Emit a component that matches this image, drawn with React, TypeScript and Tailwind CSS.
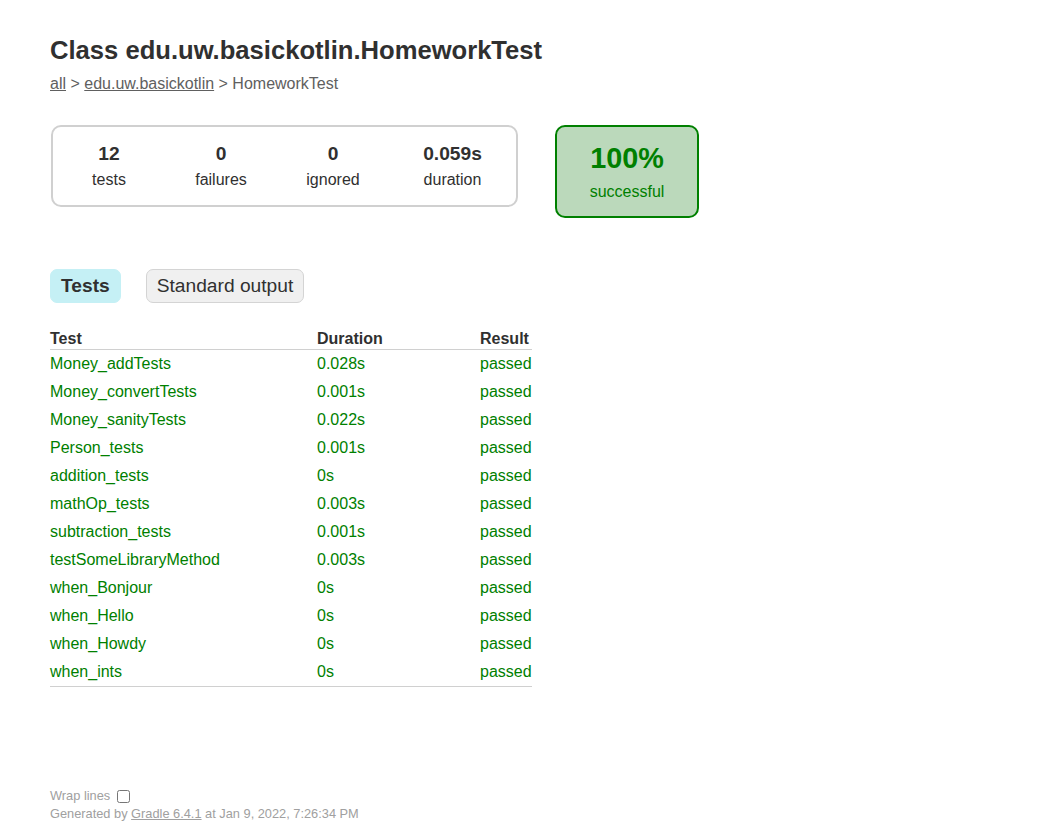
import React from "react";

const tests: [string, string][] = [
  ["Money_addTests", "0.028s"],
  ["Money_convertTests", "0.001s"],
  ["Money_sanityTests", "0.022s"],
  ["Person_tests", "0.001s"],
  ["addition_tests", "0s"],
  ["mathOp_tests", "0.003s"],
  ["subtraction_tests", "0.001s"],
  ["testSomeLibraryMethod", "0.003s"],
  ["when_Bonjour", "0s"],
  ["when_Hello", "0s"],
  ["when_Howdy", "0s"],
  ["when_ints", "0s"],
];

const counters: { value: string; label: string; w: string }[] = [
  { value: "12", label: "tests", w: "w-[112px]" },
  { value: "0", label: "failures", w: "w-[112px]" },
  { value: "0", label: "ignored", w: "w-[112px]" },
  { value: "0.059s", label: "duration", w: "w-[127px]" },
];

export default function App() {
  return (
    <div className="min-h-screen bg-white px-[50px] pt-[36px] pb-[10px] text-base text-[#303030] font-['Liberation_Sans',Arial,sans-serif]">
      <h1 className="text-[25.6px] font-bold leading-[29px] whitespace-nowrap mb-[10px]">
        Class edu.uw.basickotlin.HomeworkTest
      </h1>
      <div className="leading-[18px] text-[#606060]">
        <a className="underline text-[#606060]" href="#">all</a> &gt;{" "}
        <a className="underline text-[#606060]" href="#">edu.uw.basickotlin</a> &gt; HomeworkTest
      </div>

      <div className="mt-[32px] flex items-start">
        <div className="ml-px flex border-2 border-[#d0d0d0] rounded-[10px]">
          {counters.map((c) => (
            <div key={c.label} className={`${c.w} pt-[16px] pb-[16px] text-center`}>
              <div className="text-[19.2px] font-bold leading-[22px] mb-[6px]">{c.value}</div>
              <div className="leading-[18px]">{c.label}</div>
            </div>
          ))}
        </div>
        <div className="ml-[37px] w-[144px] border-2 border-[#008000] bg-[#bbd9bb] rounded-[10px] pt-[15px] pb-[15px] text-center text-[#008000]">
          <div className="text-[28.8px] font-bold leading-[33px] mb-[8px]">100%</div>
          <div className="leading-[18px]">successful</div>
        </div>
      </div>

      <div className="mt-[51px] flex gap-[25px]">
        <div className="rounded-[7px] border border-[#c5f0f5] bg-[#c5f0f5] px-[10px] py-[5px] text-[19.2px] leading-[22px] font-bold">
          Tests
        </div>
        <div className="rounded-[7px] border border-[#d4d4d4] bg-[#f0f0f0] px-[10px] py-[5px] text-[19.2px] leading-[22px]">
          Standard output
        </div>
      </div>

      <div className="mt-[26px] w-[482px] border-b border-[#d0d0d0]">
        <div className="grid grid-cols-[267px_163px_52px] border-b border-[#d0d0d0] py-px leading-[18px] font-bold whitespace-nowrap">
          <div>Test</div>
          <div>Duration</div>
          <div>Result</div>
        </div>
        {tests.map(([name, dur]) => (
          <div
            key={name}
            className="grid grid-cols-[267px_163px_52px] py-[5px] leading-[18px] text-[#008000] whitespace-nowrap"
          >
            <div>{name}</div>
            <div>{dur}</div>
            <div>passed</div>
          </div>
        ))}
      </div>

      <div className="mt-[99px] text-[12.8px] text-[#a0a0a0] whitespace-nowrap">
        <div className="flex h-[19px] items-center">
          <span className="leading-[15px]">Wrap lines</span>
          <input type="checkbox" className="ml-[7px] mt-[2px] h-[13px] w-[13px]" />
        </div>
        <div className="leading-[15px] mt-px">
          Generated by{" "}
          <a className="underline text-[#a0a0a0]" href="#">Gradle 6.4.1</a> at Jan 9, 2022, 7:26:34 PM
        </div>
      </div>
    </div>
  );
}
